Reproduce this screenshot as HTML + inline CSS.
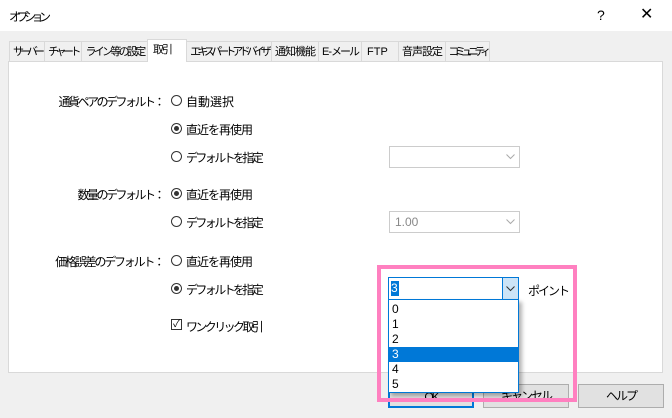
<html><head><style>
body{margin:0;width:672px;height:418px;background:#f0f0f0;font-family:"Liberation Sans","Noto Sans CJK JP",sans-serif;font-size:12px;color:#000;position:relative;overflow:hidden}
.a{position:absolute;white-space:nowrap}
.title{left:0;top:0;width:672px;height:31px;background:#fff}
.tab{position:absolute;top:41px;height:20px;border:1px solid #d9d9d9;border-bottom:none;background:#f0f0f0;text-align:center;line-height:20px;box-sizing:border-box;font-size:11px;overflow:visible}
.panel{left:8px;top:61px;width:655px;height:312px;background:#fff;border:1px solid #d9d9d9;box-sizing:border-box}
.lab{right:509px;text-align:right;letter-spacing:-2.5px}
.r{width:11px;height:11px;border:1px solid #333;border-radius:50%;box-sizing:border-box;background:#fff}
.r.on::after{content:"";position:absolute;left:2px;top:2px;width:5px;height:5px;border-radius:50%;background:#333}
.d{letter-spacing:-2.6px}.c{letter-spacing:-1px}
.cb{border:1px solid #ccc;background:#fff;box-sizing:border-box}
.btn{top:384px;width:86px;height:24px;border:1px solid #adadad;background:#e1e1e1;box-sizing:border-box;text-align:center;line-height:22px;letter-spacing:-2px}
.item{left:389px;width:129px;height:15px;line-height:15px;padding-left:3px;box-sizing:border-box}
</style></head><body>
<div class="a title"></div>
<div class="a" style="left:9px;top:8px;letter-spacing:-4.5px">オプション</div>
<div class="a" style="left:597px;top:7px;font-size:14px">?</div>
<div class="a" style="left:640px;top:4px;font-size:16px">✕</div>
<div class="tab" style="left:9px;width:36px;letter-spacing:-4px">サーバー</div>
<div class="tab" style="left:44px;width:38px;letter-spacing:-3.5px">チャート</div>
<div class="tab" style="left:81px;width:67px;letter-spacing:-2.7px">ライン等の設定</div>
<div class="tab" style="left:186px;width:86px;letter-spacing:-3.9px">エキスパートアドバイザ</div>
<div class="tab" style="left:271px;width:48px;letter-spacing:-1px">通知機能</div>
<div class="tab" style="left:318px;width:44px;letter-spacing:-2px">E - メール</div>
<div class="tab" style="left:361px;width:38px;text-align:left;padding-left:5px">FTP</div>
<div class="tab" style="left:398px;width:48px;letter-spacing:-1px">音声設定</div>
<div class="tab" style="left:445px;width:45px;letter-spacing:-4.5px">コミュニティ</div>
<div class="a panel"></div>
<div class="tab" style="left:147px;top:39px;width:40px;height:23px;background:#fff;text-align:left;padding-left:5px;z-index:2;letter-spacing:-2px">取引</div>

<div class="a lab" style="top:93px">通貨ペアのデフォルト：</div>
<div class="a lab" style="top:186px">数量のデフォルト：</div>
<div class="a lab" style="top:253px;letter-spacing:-2.2px">価格誤差のデフォルト：</div>

<div class="a r" style="left:171px;top:95px"></div><div class="a" style="left:186px;top:93px">自動選択</div>
<div class="a r on" style="left:171px;top:123px"></div><div class="a c" style="left:186px;top:121px">直近を再使用</div>
<div class="a r" style="left:171px;top:151px"></div><div class="a d" style="left:186px;top:149px">デフォルトを指定</div>
<div class="a r on" style="left:171px;top:188px"></div><div class="a c" style="left:186px;top:186px">直近を再使用</div>
<div class="a r" style="left:171px;top:216px"></div><div class="a d" style="left:186px;top:214px">デフォルトを指定</div>
<div class="a r" style="left:171px;top:255px"></div><div class="a c" style="left:186px;top:253px">直近を再使用</div>
<div class="a r on" style="left:171px;top:283px"></div><div class="a d" style="left:186px;top:281px">デフォルトを指定</div>
<div class="a" style="left:171px;top:319px;width:11px;height:11px;border:1px solid #333;box-sizing:border-box;font-size:10px;line-height:9px;text-align:center">✓</div><div class="a d" style="left:186px;top:318px">ワンクリック取引</div>

<div class="a cb" style="left:389px;top:146px;width:131px;height:22px"></div>
<svg class="a" style="left:506px;top:154px" width="9" height="6"><path d="M0.5 0.5L4.5 4.5L8.5 0.5" fill="none" stroke="#aaa"/></svg>
<div class="a cb" style="left:389px;top:211px;width:131px;height:22px;color:#888;padding:3px 5px">1.00</div>
<svg class="a" style="left:506px;top:219px" width="9" height="6"><path d="M0.5 0.5L4.5 4.5L8.5 0.5" fill="none" stroke="#aaa"/></svg>

<div class="a btn" style="left:388px;border:2px solid #0078d7">OK</div>
<div class="a btn" style="left:483px">キャンセル</div>
<div class="a btn" style="left:578px">ヘルプ</div>

<div class="a" style="left:388px;top:277px;width:131px;height:23px;border:1px solid #0078d7;background:#fff;box-sizing:border-box"></div>
<div class="a" style="left:391px;top:281px;width:8px;height:15px;background:#0078d7;color:#fff;line-height:15px">3</div>
<div class="a" style="left:502px;top:278px;width:16px;height:21px;background:#cce4f7;border-left:1px solid #0078d7;box-sizing:border-box"></div>
<svg class="a" style="left:506px;top:286px" width="9" height="6"><path d="M0.5 0.5L4.5 4.5L8.5 0.5" fill="none" stroke="#333"/></svg>
<div class="a" style="left:528px;top:282px;letter-spacing:-2px">ポイント</div>
<div class="a" style="left:388px;top:299px;width:131px;height:94px;border:1px solid #0078d7;background:#fff;box-sizing:border-box;box-shadow:3px 3px 4px rgba(0,0,0,.3)"></div>
<div class="a item" style="top:302px">0</div>
<div class="a item" style="top:317px">1</div>
<div class="a item" style="top:332px">2</div>
<div class="a item" style="top:347px;background:#0078d7;color:#fff">3</div>
<div class="a item" style="top:362px">4</div>
<div class="a item" style="top:377px">5</div>
<div class="a" style="left:377px;top:265px;width:200px;height:137px;border:4px solid #ff80c0;box-sizing:border-box"></div>
</body></html>
